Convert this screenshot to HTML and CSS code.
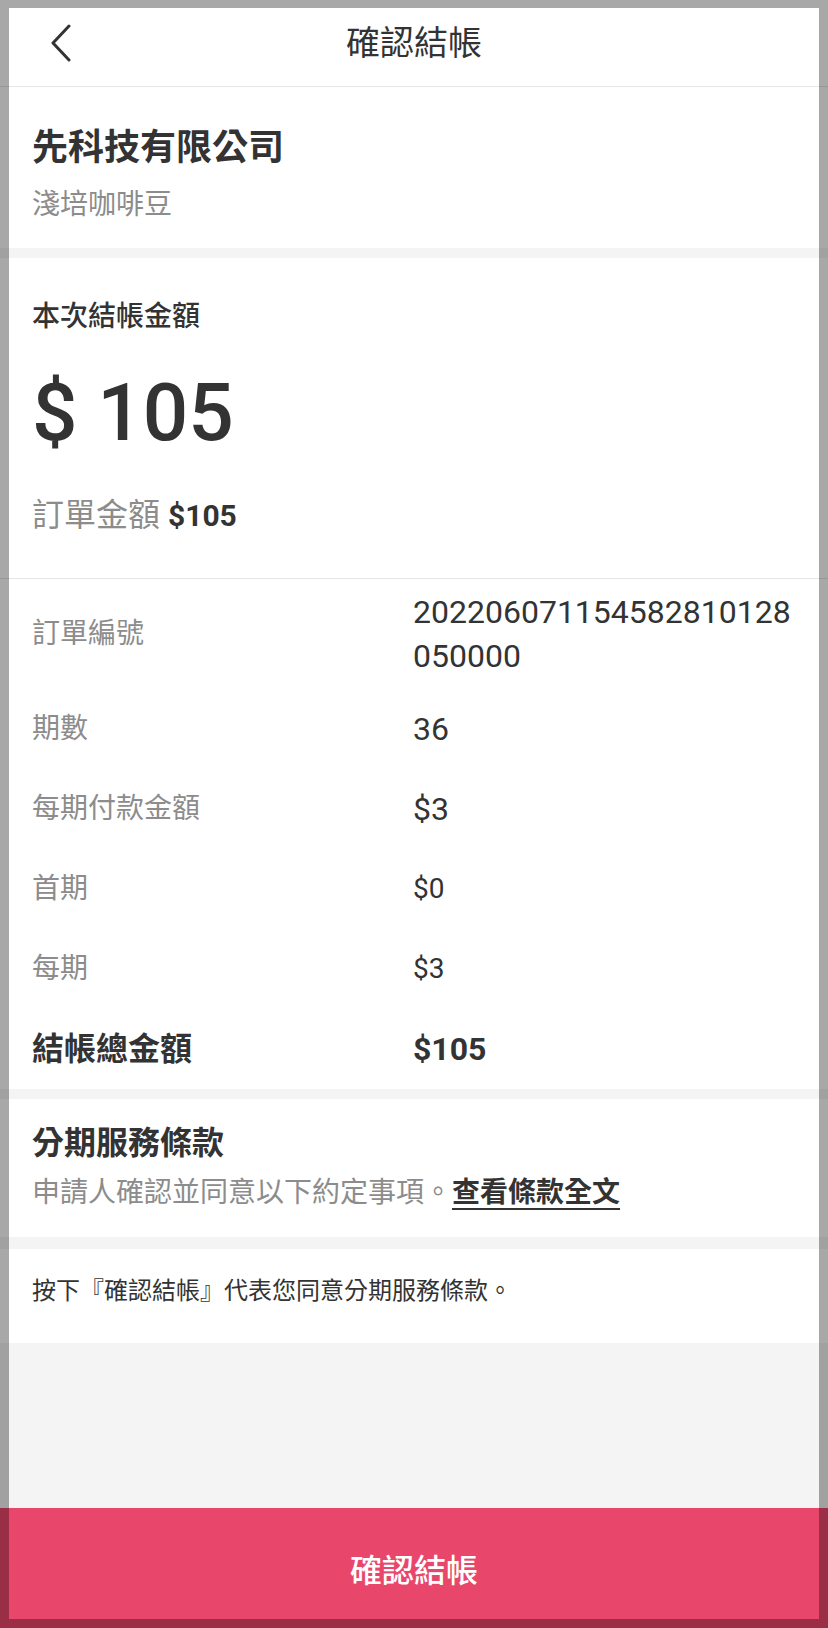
FILE: index.html
```html
<!DOCTYPE html>
<html lang="zh-Hant">
<head>
    <meta charset="UTF-8">
    <meta name="viewport" content="width=device-width, initial-scale=1.0">
    <title>確認結帳</title>
    <link rel="stylesheet" href="styles.css">
</head>
<body>
    <header class="topbar">
        <button class="back" aria-label="返回">
            <svg width="22" height="38" viewBox="0 0 22 38">
                <polyline points="19,2 3,19 19,36" fill="none" stroke="#333" stroke-width="3" stroke-linecap="round" stroke-linejoin="round"/>
            </svg>
        </button>
        <h1 class="title">確認結帳</h1>
        <div></div>
    </header>

    <main class="content">
        <section class="card merchant">
            <div class="merchant-name">先科技有限公司</div>
            <div class="merchant-item">淺培咖啡豆</div>
        </section>

        <section class="card amount">
            <div class="amount-label">本次結帳金額</div>
            <div class="amount-value">$ 105</div>
            <div class="amount-order"><span class="muted">訂單金額</span> <b>$105</b></div>
        </section>

        <section class="card details">
            <div class="row row-first">
                <div class="row-label">訂單編號</div>
                <div class="row-value order-no">202206071154582810128050000</div>
            </div>
            <div class="row">
                <div class="row-label">期數</div>
                <div class="row-value">36</div>
            </div>
            <div class="row">
                <div class="row-label">每期付款金額</div>
                <div class="row-value">$3</div>
            </div>
            <div class="row">
                <div class="row-label">首期</div>
                <div class="row-value small">$0</div>
            </div>
            <div class="row">
                <div class="row-label">每期</div>
                <div class="row-value small">$3</div>
            </div>
            <div class="row row-total">
                <div class="row-label">結帳總金額</div>
                <div class="row-value">$105</div>
            </div>
        </section>

        <section class="card terms">
            <div class="terms-title">分期服務條款</div>
            <div class="terms-text">申請人確認並同意以下約定事項。<a href="#" class="terms-link">查看條款全文</a></div>
        </section>

        <section class="card notice">
            按下『確認結帳』代表您同意分期服務條款。
        </section>
    </main>

    <footer class="footer">
        <button class="confirm">確認結帳</button>
    </footer>

    <div class="frame"></div>
</body>
</html>
```

FILE: styles.css
```css
* {
    box-sizing: border-box;
}
body {
    margin: 0;
    min-height: 100vh;
    display: flex;
    flex-direction: column;
    background-color: #f4f4f4;
    font-family: Roboto, "Noto Sans CJK TC", sans-serif;
    color: #333;
}
.topbar {
    height: 87px;
    background-color: #fff;
    border-bottom: 1px solid #e6e6e6;
    display: grid;
    grid-template-columns: 1fr auto 1fr;
    align-items: center;
}
.back {
    justify-self: start;
    margin-left: 50px;
    padding: 0;
    border: none;
    background: none;
    display: flex;
}
.title {
    margin: 0;
    font-size: 34px;
    font-weight: 400;
    line-height: 44px;
    color: #333;
}
.card {
    background-color: #fff;
    padding: 0 32px;
}
.merchant {
    padding-top: 36px;
    padding-bottom: 23px;
    margin-bottom: 10px;
}
.merchant-name {
    font-size: 36px;
    font-weight: 700;
    line-height: 50px;
}
.merchant-item {
    margin-top: 12px;
    font-size: 28px;
    line-height: 40px;
    color: #8c8c8c;
}
.amount {
    padding-top: 39px;
    padding-bottom: 40px;
    border-bottom: 1px solid #e6e6e6;
}
.amount-label {
    font-size: 28px;
    font-weight: 500;
    line-height: 40px;
}
.amount-value {
    margin-top: 26px;
    font-size: 80px;
    font-weight: 500;
    line-height: 100px;
}
.amount-order {
    margin-top: 30px;
    font-size: 32px;
    line-height: 44px;
}
.amount-order b {
    font-size: 30px;
    font-weight: 700;
}
.muted {
    color: #8c8c8c;
}
.details {
    margin-bottom: 10px;
}
.row {
    display: grid;
    grid-template-columns: 381px 1fr;
    align-items: center;
    padding: 18px 0;
}
.row-first {
    padding: 11px 0;
}
.row-label {
    font-size: 28px;
    line-height: 44px;
    color: #8c8c8c;
}
.row-value {
    font-size: 32px;
    line-height: 44px;
    color: #333;
}
.row-value.small {
    font-size: 28px;
}
.order-no {
    word-break: break-all;
}
.row-total .row-label,
.row-total .row-value {
    font-size: 32px;
    font-weight: 700;
    color: #333;
}
.terms {
    padding-top: 22px;
    padding-bottom: 24px;
    margin-bottom: 12px;
}
.terms-title {
    font-size: 32px;
    font-weight: 700;
    line-height: 44px;
}
.terms-text {
    margin-top: 8px;
    font-size: 28px;
    line-height: 40px;
    color: #8c8c8c;
}
.terms-link {
    color: #333;
    font-weight: 700;
    text-decoration: underline;
    text-decoration-thickness: 2px;
    text-underline-offset: 6px;
}
.notice {
    padding-top: 24px;
    padding-bottom: 34px;
    font-size: 24px;
    line-height: 36px;
}
.footer {
    margin-top: auto;
}
.confirm {
    width: 100%;
    height: 120px;
    border: none;
    background-color: #e8476b;
    color: #fff;
    font-family: inherit;
    font-size: 32px;
    font-weight: 500;
    padding-bottom: 2px;
}
.frame {
    position: fixed;
    inset: 0;
    border-style: solid;
    border-color: rgba(0, 0, 0, 0.34);
    border-width: 8px 9px 9px 9px;
    pointer-events: none;
}
```
